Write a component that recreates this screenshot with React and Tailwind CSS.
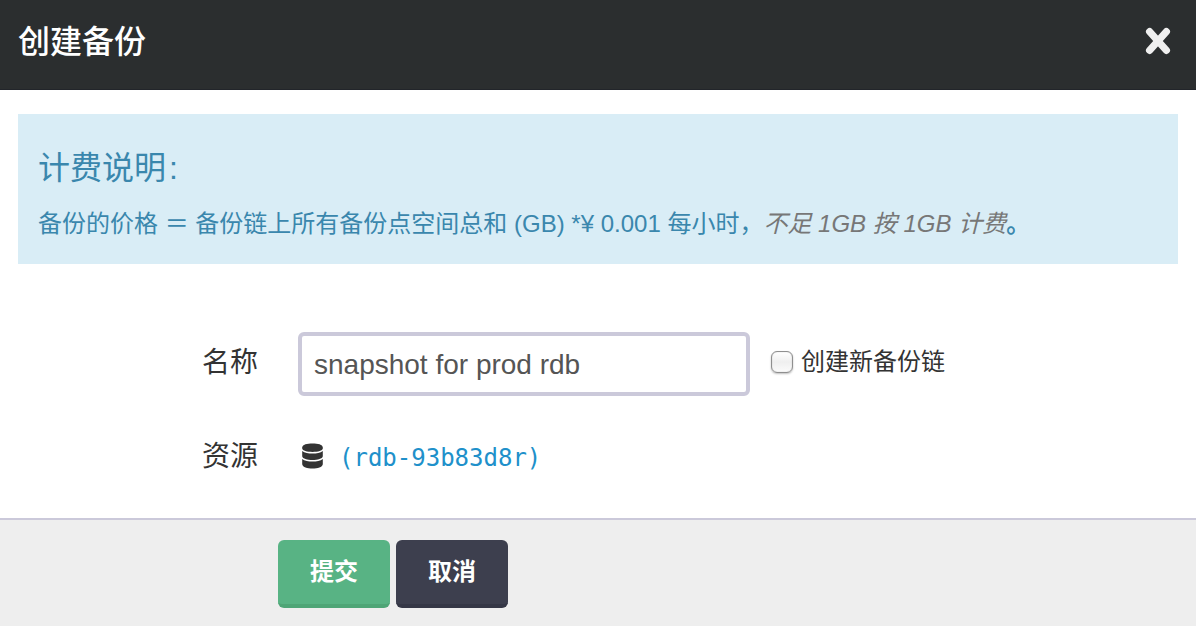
function CloseIcon() {
  return (
    <svg viewBox="0 0 26 28" className="block h-7 w-[26px]" fill="none" stroke="#efefef" strokeWidth="7.2" strokeLinecap="round">
      <path d="M4.6 4.600L21.400 23.400M21.400 4.600L4.600 23.400" />
    </svg>
  );
}

function DatabaseIcon() {
  return (
    <svg viewBox="0 0 21 26" className="block h-[26px] w-[21px] shrink-0" fill="#333333">
      <path d="M.2 4.400C.4 1.500 5 .5 10.500 .5S20.600 1.500 20.800 4.400V5.600C20.600 7.900 16 9 10.500 9S.4 7.900 .2 5.600z" />
      <path d="M.2 8C2.500 9.900 6.500 10.600 10.500 10.600S18.500 9.900 20.800 8V13.200C20.300 15.800 15.800 17 10.500 17S.7 15.800 .2 13.200z" />
      <path d="M.2 16C2.500 17.900 6.500 18.600 10.500 18.600S18.500 17.900 20.800 16V21.200C20.300 24.200 15.800 25.400 10.500 25.400S.7 24.200 .2 21.200z" />
    </svg>
  );
}

function Header() {
  return (
    <header className="flex h-[90px] items-start justify-between border-b border-[#22252a] bg-[#2b2e2f] pl-[18px] pr-[25px]">
      <h1 className="mt-[18px] text-[32px] font-medium leading-[48px] text-white">创建备份</h1>
      <button type="button" aria-label="关闭" className="mt-[27px]">
        <CloseIcon />
      </button>
    </header>
  );
}

function BillingNotice() {
  return (
    <section className="mx-[18px] mt-6 h-[150px] whitespace-nowrap bg-[#d9edf6] pl-5 text-[#3a87ad]">
      <h2 className="pt-[30px] text-[32px] leading-[48px]">
        计费说明<span className="ml-[3px]">:</span>
      </h2>
      <p className="mt-3.5 text-[24px] leading-9">
        备份的价格 ＝ 备份链上所有备份点空间总和 (GB) *¥ 0.001 每小时，
        <em className="text-[#777777]">不足 1GB 按 1GB 计费</em>
        <span className="font-bold">。</span>
      </p>
    </section>
  );
}

function Footer() {
  return (
    <footer className="flex h-[108px] items-start gap-1.5 border-t-2 border-[#cbc9da] bg-[#eeeeee] pl-[278px] pt-5">
      <button type="button" className="h-[68px] w-28 rounded-md border-b-4 border-[#4ea576] bg-[#58b384] text-[24px] font-bold leading-9 text-white">
        提交
      </button>
      <button type="button" className="h-[68px] w-28 rounded-md border-b-4 border-[#353746] bg-[#3d3f4e] text-[24px] font-bold leading-9 text-white">
        取消
      </button>
    </footer>
  );
}

export default function App() {
  return (
    <div className="flex h-[626px] w-[1196px] flex-col overflow-hidden bg-white font-['Liberation_Sans','Noto_Sans_CJK_SC',sans-serif] text-[#333333]">
      <Header />
      <BillingNotice />
      <form className="flex flex-1 flex-col pt-[68px]" onSubmit={(e) => e.preventDefault()}>
        <div className="flex h-16 items-center">
          <label htmlFor="name" className="w-[298px] pb-0.5 pl-[202px] text-[28px] leading-10">名称</label>
          <input
            id="name"
            defaultValue="snapshot for prod rdb"
            className="h-16 w-[452px] rounded-md border-4 border-[#cbc9da] bg-white px-3 pt-0.5 text-[28px] text-[#555555] outline-none"
          />
          <label className="ml-[21px] flex items-center gap-2 pb-0.5 text-[24px] leading-9">
            <input
              type="checkbox"
              className="mb-0.5 size-[22px] appearance-none rounded-[6px] border border-[#8f8f8f] bg-linear-to-b from-white via-[#efefef] to-[#fbfbfb] shadow-[0_1px_2px_#00000040,inset_0_0_1px_#00000060]"
            />
            <span className="-mt-0.5">创建新备份链</span>
          </label>
        </div>
        <div className="mt-7 flex h-16 items-center">
          <span className="w-[302px] pl-[202px] pt-0.5 text-[28px] leading-10">资源</span>
          <DatabaseIcon />
          <a href="#rdb" className="ml-4 pt-[3px] font-['DejaVu_Sans_Mono',monospace] text-[24px] leading-8 text-[#2090ca]">(rdb-93b83d8r)</a>
        </div>
      </form>
      <Footer />
    </div>
  );
}
